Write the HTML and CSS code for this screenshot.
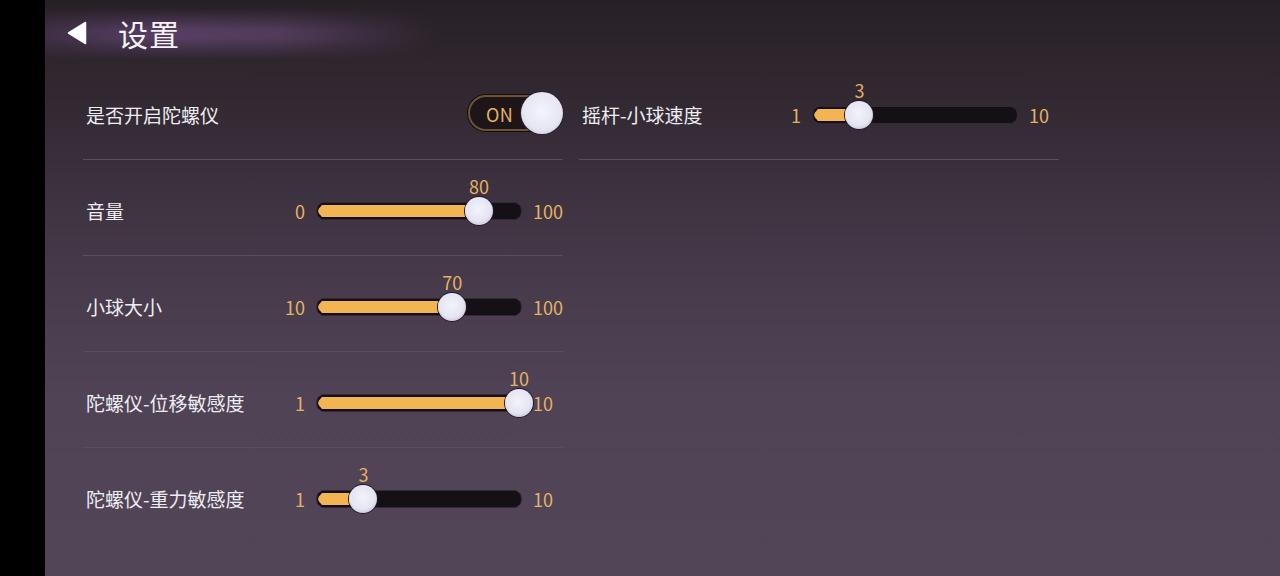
FILE: index.html
```html
<!DOCTYPE html>
<html lang="zh-CN">
<head>
<meta charset="utf-8">
<title>设置</title>
<link rel="stylesheet" href="styles.css">
</head>
<body>
<div class="screen">
  <div class="side"></div>
  <div class="app">
    <header class="header">
      <svg class="back" width="20" height="24" viewBox="0 0 20 24"><path d="M18.5 1.5 L18.5 22.5 L1.5 12 Z" fill="#fff" stroke="#fff" stroke-width="1.5" stroke-linejoin="round"/></svg>
      <h1 class="title">设置</h1>
    </header>
    <main class="content">
      <section class="col">
        <div class="row sep">
          <span class="label">是否开启陀螺仪</span>
          <div class="toggle">
            <div class="toggle-track"><span class="toggle-text">ON</span></div>
            <div class="toggle-knob"></div>
          </div>
        </div>
        <div class="row sep">
          <span class="label">音量</span>
          <div class="slider">
            <span class="min">0</span>
            <div class="track" style="--f:0.8">
              <div class="fill"></div>
              <div class="knob"><span class="val">80</span></div>
            </div>
            <span class="max">100</span>
          </div>
        </div>
        <div class="row sep">
          <span class="label">小球大小</span>
          <div class="slider">
            <span class="min">10</span>
            <div class="track" style="--f:0.6667">
              <div class="fill"></div>
              <div class="knob"><span class="val">70</span></div>
            </div>
            <span class="max">100</span>
          </div>
        </div>
        <div class="row sep">
          <span class="label">陀螺仪-位移敏感度</span>
          <div class="slider">
            <span class="min">1</span>
            <div class="track" style="--f:1">
              <div class="fill"></div>
              <div class="knob"><span class="val">10</span></div>
            </div>
            <span class="max">10</span>
          </div>
        </div>
        <div class="row">
          <span class="label">陀螺仪-重力敏感度</span>
          <div class="slider">
            <span class="min">1</span>
            <div class="track" style="--f:0.2222">
              <div class="fill"></div>
              <div class="knob"><span class="val">3</span></div>
            </div>
            <span class="max">10</span>
          </div>
        </div>
      </section>
      <section class="col">
        <div class="row sep">
          <span class="label">摇杆-小球速度</span>
          <div class="slider">
            <span class="min">1</span>
            <div class="track" style="--f:0.2222">
              <div class="fill"></div>
              <div class="knob"><span class="val">3</span></div>
            </div>
            <span class="max">10</span>
          </div>
        </div>
      </section>
    </main>
  </div>
</div>
</body>
</html>
```
FILE: styles.css
```css
* { box-sizing: border-box; }
html, body { margin: 0; padding: 0; }
body {
  width: 1280px;
  height: 576px;
  overflow: hidden;
  background: #000;
  font-family: "Noto Sans CJK SC", "Noto Sans", sans-serif;
}
.screen { display: flex; height: 576px; }
.side { width: 45px; background: #000; flex: none; }
.app {
  flex: 1;
  height: 576px;
  background: linear-gradient(to bottom, #282027 0px, #2f262e 70px, #382d39 150px, #453949 260px, #514356 400px, #534558 576px);
  position: relative;
}
.header {
  height: 71px;
  display: flex;
  align-items: center;
  padding-left: 22px;
  position: relative;
}
.header::before {
  content: "";
  position: absolute;
  left: 0;
  top: 8px;
  width: 390px;
  height: 52px;
  background: linear-gradient(to right, rgba(80,58,92,0.55) 0%, rgba(98,70,114,0.8) 30%, rgba(96,70,110,0.7) 60%, rgba(80,60,90,0) 100%);
  -webkit-mask-image: linear-gradient(to bottom, transparent 0%, #000 42%, #000 58%, transparent 100%);
  mask-image: linear-gradient(to bottom, transparent 0%, #000 42%, #000 58%, transparent 100%);
}
.back { position: relative; margin-top: -5px; }
.title {
  position: relative;
  margin: -5px 0 0 31px;
  font-size: 30px;
  font-weight: 400;
  color: #f4f2f5;
  letter-spacing: 1px;
}
.content {
  display: flex;
  gap: 16px;
  padding-left: 38px;
}
.col { width: 480px; display: flex; flex-direction: column; }
.row {
  height: 88px;
  display: flex;
  align-items: center;
  justify-content: space-between;
  padding-left: 3px;
  margin-bottom: 8px;
}
.row.sep {
  height: 89px;
  border-bottom: 1px solid #5b4d60;
  margin-bottom: 7px;
}
.label {
  font-size: 19px;
  font-weight: 400;
  color: #eeedf2;
  line-height: 1;
  margin-top: -2px;
}
.toggle {
  position: relative;
  width: 95px;
  height: 42px;
  margin-top: -4px;
}
.toggle-track {
  position: absolute;
  left: 0;
  top: 3px;
  width: 86px;
  height: 36px;
  border-radius: 18px;
  background: #1d1518;
  border: 2px solid #6d5233;
  box-shadow: 0 0 0 1px #120c10;
  padding-left: 16px;
  padding-top: 2px;
  display: flex;
  align-items: center;
}
.toggle-text {
  font-size: 18px;
  color: #e3b264;
  letter-spacing: 0.5px;
}
.toggle-knob {
  position: absolute;
  right: 0;
  top: 0;
  width: 42px;
  height: 42px;
  border-radius: 50%;
  background: radial-gradient(circle at 50% 45%, #f4f4fc 0%, #e6e6f3 60%, #d6d5e4 75%, #a4a0b2 88%, #6e6878 100%);
  box-shadow: 0 0 0 1px #2a2030;
}
.slider {
  display: flex;
  align-items: center;
  width: 288px;
}
.min, .max {
  font-size: 18px;
  color: #e3b264;
  line-height: 1;
}
.min { width: 30px; text-align: right; margin-right: 11px; }
.max { margin-left: 11px; }
.track {
  position: relative;
  width: 206px;
  height: 18px;
}
.track::before {
  content: "";
  position: absolute;
  inset: 0;
  background: #332835;
  clip-path: polygon(6px 0, calc(100% - 6px) 0, calc(100% - 1px) 4px, 100% 50%, calc(100% - 1px) calc(100% - 4px), calc(100% - 6px) 100%, 6px 100%, 1px calc(100% - 4px), 0 50%, 1px 4px);
}
.track::after {
  content: "";
  position: absolute;
  inset: 1px;
  background: #151016;
  clip-path: polygon(5px 0, calc(100% - 5px) 0, calc(100% - 1px) 3px, 100% 50%, calc(100% - 1px) calc(100% - 3px), calc(100% - 5px) 100%, 5px 100%, 1px calc(100% - 3px), 0 50%, 1px 3px);
}
.fill {
  position: absolute;
  left: 2px;
  top: 3px;
  height: 12px;
  width: calc(3px + var(--f) * 200px);
  background: #f2b552;
  z-index: 1;
  clip-path: polygon(4px 0, 100% 0, 100% 100%, 4px 100%, 1px 70%, 0 50%, 1px 30%);
}
.knob {
  position: absolute;
  top: -5px;
  left: calc(3px + var(--f) * 200px - 14px);
  width: 28px;
  height: 28px;
  border-radius: 50%;
  background: radial-gradient(circle at 48% 44%, #f3f3fb 0%, #e5e5f3 56%, #d3d2e2 70%, #9e9aae 85%, #5f5969 100%);
  box-shadow: 0 0 0 1px #241a28;
  z-index: 2;
}
.val {
  position: absolute;
  left: 50%;
  bottom: 30px;
  transform: translateX(-50%);
  font-size: 18px;
  color: #e3b264;
  line-height: 1;
  white-space: nowrap;
}
```
